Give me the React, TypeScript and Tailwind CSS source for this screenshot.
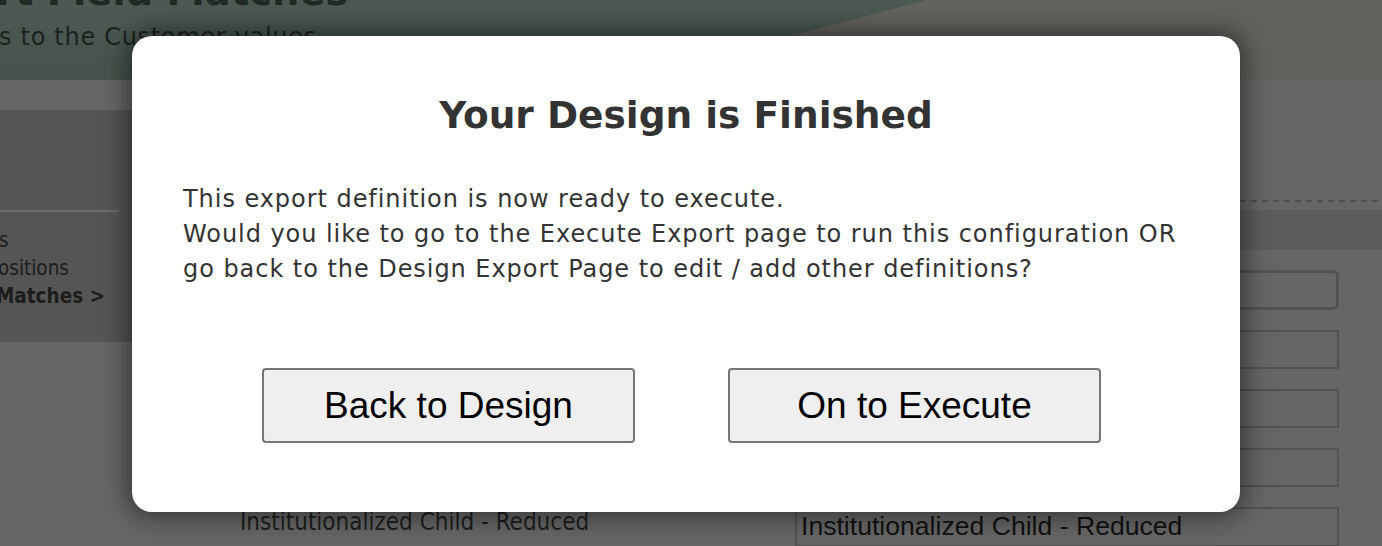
export default function App() {
  const cond = "font-['DejaVu_Sans',sans-serif] [font-stretch:condensed]";
  const reg = "font-['DejaVu_Sans',sans-serif] [font-stretch:normal]";
  const arial = "font-['Liberation_Sans',Arial,sans-serif] [font-stretch:normal]";
  const rows = [
    { label: "Regular Adult", h: "h-[40px] border-[3px] rounded-[6px]" },
    { label: "Reduced Adult", h: "h-[39px] border-2" },
    { label: "Senior Citizen", h: "h-[39px] border-2" },
    { label: "Institutionalized Adult", h: "h-[39px] border-2" },
    { label: "Institutionalized Child - Reduced", h: "h-[40px] border-2", value: "Institutionalized Child - Reduced" },
  ];
  return (
    <div className={`relative w-[1382px] h-[546px] overflow-hidden bg-[#666] ${cond}`}>
      {/* dimmed page header */}
      <header className="relative h-[80px] overflow-hidden bg-gradient-to-b from-[#4d5a53] to-[#46524b]">
        <svg className="absolute inset-0" width="1382" height="80" viewBox="0 0 1382 80">
          <polygon points="927,0 1382,0 1382,80 623,80" fill="#64625c" />
        </svg>
        <div className={`relative -mt-[28px] -ml-[4px] h-[40px] text-[38.5px] font-bold leading-[40px] text-[#1f2a24] whitespace-nowrap ${reg}`}>
          rt Field Matches
        </div>
        <div className={`relative mt-[10px] -ml-[1px] text-[24px] leading-[30px] tracking-[0.7px] text-[#1b221e] whitespace-nowrap ${reg}`}>
          s to the Customer values
        </div>
      </header>
      <div className="h-[30px] bg-[#666]" />
      <div className="flex">
        <aside className="w-[140px] h-[232px] shrink-0 overflow-hidden bg-[#555]">
          <div className="mt-[100px] w-[119px] h-[2px] bg-[#6b6b6b]" />
          <div className="mt-[14px] text-[20.5px] leading-[28px] text-[#1c1c1c] whitespace-nowrap">
            <div className="-ml-[1px]">s</div>
            <div className="-ml-[2px]">ositions</div>
            <div className="-ml-[4px] font-bold">Matches &gt;</div>
          </div>
        </aside>
        <div className="flex-1">
          <div className="h-[90px]" />
          <div className="h-[2px] bg-[repeating-linear-gradient(90deg,#4f4f4f_0_6px,transparent_6px_11px)]" />
          <div className="mt-[8px] h-[40px] bg-[#5c5c5c]" />
          <div className="mt-[20px] flex flex-col gap-[20px]">
            {rows.map((r, i) => (
              <div key={i} className="flex items-start">
                <div className="w-[655px] pl-[100px] text-[24px] leading-[30px] text-[#1e1e1e] whitespace-nowrap">
                  {r.label}
                </div>
                <div
                  className={`w-[544px] ${r.h} border-[#525252] flex items-center pl-[4px] ${arial} text-[26.6px] text-[#111] whitespace-nowrap`}
                >
                  {r.value ?? ""}
                </div>
              </div>
            ))}
          </div>
        </div>
      </div>

      {/* modal dialog */}
      <div className={`absolute left-[132px] top-[36px] w-[1108px] h-[476px] rounded-[20px] bg-white shadow-[0_0_24px_6px_rgba(0,0,0,0.45)] ${reg}`}>
        <h1 className="pt-[56px] text-center text-[37.5px] font-bold leading-[46px] text-[#333]">
          Your Design is Finished
        </h1>
        <div className="mt-[44px] pl-[51px] text-[24px] leading-[35px] tracking-[0.95px] text-[#333]">
          <p>This export definition is now ready to execute.</p>
          <p>Would you like to go to the Execute Export page to run this configuration OR</p>
          <p>go back to the Design Export Page to edit / add other definitions?</p>
        </div>
        <div className="mt-[81px] flex gap-[93px] pl-[130px]">
          <button className={`w-[373px] h-[75px] rounded-[4px] border-2 border-[#767676] bg-[#efefef] ${arial} text-[37px] text-black`}>
            Back to Design
          </button>
          <button className={`w-[373px] h-[75px] rounded-[4px] border-2 border-[#767676] bg-[#efefef] ${arial} text-[37px] text-black`}>
            On to Execute
          </button>
        </div>
      </div>
    </div>
  );
}
